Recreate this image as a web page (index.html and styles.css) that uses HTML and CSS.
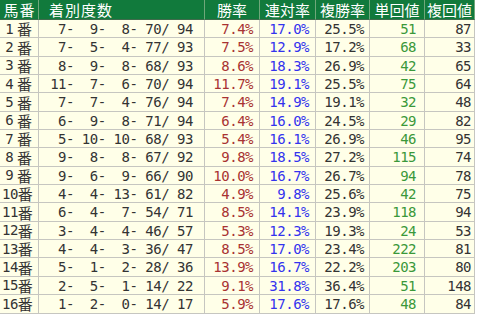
FILE: index.html
```html
<!DOCTYPE html>
<html lang="ja">
<head>
<meta charset="utf-8">
<link rel="stylesheet" href="styles.css">
</head>
<body>
<div class="tbl">
  <div class="h c-no">馬番</div><div class="h c-cnt">着別度数</div><div class="h">勝率</div><div class="h">連対率</div><div class="h">複勝率</div><div class="h">単回値</div><div class="h">複回値</div>

  <div class="c no"><span class="d1">1</span><span class="fw">番</span></div><div class="c cnt"> 7-  9-  8- 70/ 94</div><div class="c win">7.4%</div><div class="c ren">17.0%</div><div class="c fuku">25.5%</div><div class="c tan">51</div><div class="c fk">87</div>
  <div class="c no"><span class="d1">2</span><span class="fw">番</span></div><div class="c cnt"> 7-  5-  4- 77/ 93</div><div class="c win">7.5%</div><div class="c ren">12.9%</div><div class="c fuku">17.2%</div><div class="c tan">68</div><div class="c fk">33</div>
  <div class="c no"><span class="d1">3</span><span class="fw">番</span></div><div class="c cnt"> 8-  9-  8- 68/ 93</div><div class="c win">8.6%</div><div class="c ren">18.3%</div><div class="c fuku">26.9%</div><div class="c tan">42</div><div class="c fk">65</div>
  <div class="c no"><span class="d1">4</span><span class="fw">番</span></div><div class="c cnt">11-  7-  6- 70/ 94</div><div class="c win">11.7%</div><div class="c ren">19.1%</div><div class="c fuku">25.5%</div><div class="c tan">75</div><div class="c fk">64</div>
  <div class="c no"><span class="d1">5</span><span class="fw">番</span></div><div class="c cnt"> 7-  7-  4- 76/ 94</div><div class="c win">7.4%</div><div class="c ren">14.9%</div><div class="c fuku">19.1%</div><div class="c tan">32</div><div class="c fk">48</div>
  <div class="c no"><span class="d1">6</span><span class="fw">番</span></div><div class="c cnt"> 6-  9-  8- 71/ 94</div><div class="c win">6.4%</div><div class="c ren">16.0%</div><div class="c fuku">24.5%</div><div class="c tan">29</div><div class="c fk">82</div>
  <div class="c no"><span class="d1">7</span><span class="fw">番</span></div><div class="c cnt"> 5- 10- 10- 68/ 93</div><div class="c win">5.4%</div><div class="c ren">16.1%</div><div class="c fuku">26.9%</div><div class="c tan">46</div><div class="c fk">95</div>
  <div class="c no"><span class="d1">8</span><span class="fw">番</span></div><div class="c cnt"> 9-  8-  8- 67/ 92</div><div class="c win">9.8%</div><div class="c ren">18.5%</div><div class="c fuku">27.2%</div><div class="c tan">115</div><div class="c fk">74</div>
  <div class="c no"><span class="d1">9</span><span class="fw">番</span></div><div class="c cnt"> 9-  6-  9- 66/ 90</div><div class="c win">10.0%</div><div class="c ren">16.7%</div><div class="c fuku">26.7%</div><div class="c tan">94</div><div class="c fk">78</div>
  <div class="c no">10<span class="fw">番</span></div><div class="c cnt"> 4-  4- 13- 61/ 82</div><div class="c win">4.9%</div><div class="c ren">9.8%</div><div class="c fuku">25.6%</div><div class="c tan">42</div><div class="c fk">75</div>
  <div class="c no">11<span class="fw">番</span></div><div class="c cnt"> 6-  4-  7- 54/ 71</div><div class="c win">8.5%</div><div class="c ren">14.1%</div><div class="c fuku">23.9%</div><div class="c tan">118</div><div class="c fk">94</div>
  <div class="c no">12<span class="fw">番</span></div><div class="c cnt"> 3-  4-  4- 46/ 57</div><div class="c win">5.3%</div><div class="c ren">12.3%</div><div class="c fuku">19.3%</div><div class="c tan">24</div><div class="c fk">53</div>
  <div class="c no">13<span class="fw">番</span></div><div class="c cnt"> 4-  4-  3- 36/ 47</div><div class="c win">8.5%</div><div class="c ren">17.0%</div><div class="c fuku">23.4%</div><div class="c tan">222</div><div class="c fk">81</div>
  <div class="c no">14<span class="fw">番</span></div><div class="c cnt"> 5-  1-  2- 28/ 36</div><div class="c win">13.9%</div><div class="c ren">16.7%</div><div class="c fuku">22.2%</div><div class="c tan">203</div><div class="c fk">80</div>
  <div class="c no">15<span class="fw">番</span></div><div class="c cnt"> 2-  5-  1- 14/ 22</div><div class="c win">9.1%</div><div class="c ren">31.8%</div><div class="c fuku">36.4%</div><div class="c tan">51</div><div class="c fk">148</div>
  <div class="c no">16<span class="fw">番</span></div><div class="c cnt"> 1-  2-  0- 14/ 17</div><div class="c win">5.9%</div><div class="c ren">17.6%</div><div class="c fuku">17.6%</div><div class="c tan">48</div><div class="c fk">84</div>
</div>
</body>
</html>
```

FILE: styles.css
```css
html, body {
  margin: 0;
  padding: 0;
  background: #ffffff;
}

.tbl {
  display: grid;
  width: 475px;
  grid-template-columns: 39px 166px 55px 56px 54px 55px 50px;
  grid-template-rows: 20px repeat(16, 18.35px);
  font-family: "DejaVu Sans Mono", "Noto Sans CJK JP", monospace;
}

.h {
  box-sizing: border-box;
  background: #117a3c;
  color: #ffffff;
  font-family: "Noto Sans CJK JP", sans-serif;
  font-size: 15px;
  line-height: 19px;
  text-align: center;
  white-space: nowrap;
  border-right: 1px solid #6fa77a;
  border-bottom: 1px solid #3f6b4c;
}

.h.c-no {
  letter-spacing: 1px;
  padding-left: 1px;
}

.h.c-cnt {
  text-align: left;
  padding-left: 10px;
  letter-spacing: 1px;
}

.c {
  box-sizing: border-box;
  background: #ffffe8;
  border-right: 1px solid #c6c6c0;
  border-bottom: 1px solid #c6c6c0;
  font-size: 14px;
  letter-spacing: -0.5px;
  line-height: 18px;
  color: #333333;
  white-space: pre;
  text-align: right;
}

.no {
  display: flex;
  align-items: center;
  text-align: left;
  padding-left: 2px;
  font-size: 14px;
}

.d1 {
  display: inline-block;
  width: 15px;
  text-align: center;
  letter-spacing: 0;
}

.fw {
  font-family: "Noto Sans CJK JP", sans-serif;
  font-size: 15px;
  line-height: 15px;
  letter-spacing: 0;
}

.cnt {
  text-align: center;
}

.win {
  color: #a83232;
  padding-right: 6px;
}

.ren {
  color: #3333ee;
  padding-right: 6px;
}

.fuku {
  padding-right: 5px;
}

.tan {
  color: #3a983a;
  padding-right: 8px;
}

.fk {
  padding-right: 3px;
}
```
